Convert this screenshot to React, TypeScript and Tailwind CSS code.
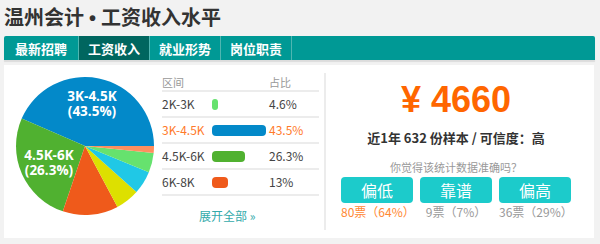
import React from 'react';

const slices = [
  { pct: 43.5, color: '#0389c9' },
  { pct: 26.3, color: '#50b130' },
  { pct: 13, color: '#ef5a1b' },
  { pct: 5.6, color: '#dde000' },
  { pct: 5.4, color: '#20c8e6' },
  { pct: 4.6, color: '#66e26e' },
  { pct: 1.6, color: '#ff8f5e' },
];

const rows = [
  { range: '2K-3K', pct: 4.6, color: '#66e26e', hot: false },
  { range: '3K-4.5K', pct: 43.5, color: '#0389c9', hot: true },
  { range: '4.5K-6K', pct: 26.3, color: '#50b130', hot: false },
  { range: '6K-8K', pct: 13, color: '#ef5a1b', hot: false },
];

const tabs = ['最新招聘', '工资收入', '就业形势', '岗位职责'];

function Pie() {
  const cx = 70;
  const cy = 70;
  const r = 69;
  let start = 0;
  const pt = (deg: number) => {
    const a = (deg * Math.PI) / 180;
    return [cx + r * Math.cos(a), cy - r * Math.sin(a)];
  };
  return (
    <svg width="140" height="140" viewBox="0 0 140 140">
      {slices.map((s, i) => {
        const sweep = (s.pct / 100) * 360;
        const [x1, y1] = pt(start);
        const [x2, y2] = pt(start + sweep);
        start += sweep;
        const large = sweep > 180 ? 1 : 0;
        return (
          <path
            key={i}
            d={`M${cx} ${cy} L${x1} ${y1} A${r} ${r} 0 ${large} 0 ${x2} ${y2} Z`}
            fill={s.color}
          />
        );
      })}
      <g fill="#fff" fontFamily="'Open Sans', sans-serif" fontWeight="700" fontSize="13.5" textAnchor="middle">
        <text x="77" y="25">3K-4.5K</text>
        <text x="77" y="40">(43.5%)</text>
        <text x="34" y="84">4.5K-6K</text>
        <text x="34" y="99">(26.3%)</text>
      </g>
    </svg>
  );
}

export default function App() {
  return (
    <div className="w-[600px] h-[244px] bg-[#f2f2f2] pl-[4px] font-['Noto_Sans_CJK_SC',sans-serif] text-[#333]">
      <h1 className="pt-[5px] h-[36px] text-[20px] leading-[24px] font-bold text-[#333]">
        温州会计<span className="mx-[5px] font-['Liberation_Sans',sans-serif]">•</span>工资收入水平
      </h1>

      <div className="w-[591px] h-[24px] bg-[#009995] rounded-t-[2px] flex shadow-[0_2px_1px_#dcdcdc]">
        {tabs.map((t, i) => (
          <div
            key={t}
            className={`${i === 0 ? 'w-[75px] rounded-tl-[2px]' : 'w-[71px]'} ${i === 1 ? 'bg-[#00665f]' : ''} h-full border-r border-[#4fb6b1] flex items-center justify-center text-white text-[13px] font-bold leading-none`}
          >
            {t}
          </div>
        ))}
      </div>

      <div className="mt-[5px] w-[590px] h-[173px] bg-white flex">
        <div className="pl-[11px] pt-[11px]">
          <Pie />
        </div>

        <div className="ml-[7px] w-[157px] pt-[9px] text-[12px]">
          <div className="h-[18px] flex items-center border-b-2 border-[#ececec] text-[11px] text-[#999]">
            <span className="w-[107px]">区间</span>
            <span>占比</span>
          </div>
          {rows.map((r) => (
            <div
              key={r.range}
              className={`h-[26px] flex items-center border-b-2 border-[#ececec] ${r.hot ? 'text-[#ff7a2a]' : 'text-[#444]'}`}
            >
              <span className="w-[50px]">{r.range}</span>
              <span className="w-[57px] flex">
                <span
                  className="h-[11px] rounded-[4px] block"
                  style={{ width: Math.max(5, r.pct * 1.24), background: r.color }}
                />
              </span>
              <span>{r.pct}%</span>
            </div>
          ))}
          <div className="mt-[12px] pl-[37px] text-[12px] leading-[16px] text-[#33aaaa]">展开全部 »</div>
        </div>

        <div className="ml-[5px] my-[8px] w-[2px] bg-[#ececec]" />

        <div className="flex-1 pr-[8px] flex flex-col items-center">
          <div className="mt-[15px] h-[40px] leading-[40px] text-[36px] font-bold text-[#ff6600] font-['Liberation_Sans','Noto_Sans_CJK_SC',sans-serif]">
            ¥ 4660
          </div>
          <div className="mt-[9px] text-[13px] leading-[18px] font-bold text-[#333]">近1年 632 份样本 / 可信度：高</div>
          <div className="mt-[12px] text-[11px] leading-[16px] text-[#999]">你觉得该统计数据准确吗？</div>
          <div className="mt-[2px] flex gap-[7px]">
            {[
              { t: '偏低', v: '80票（64%）', hot: true },
              { t: '靠谱', v: '9票（7%）', hot: false },
              { t: '偏高', v: '36票（29%）', hot: false },
            ].map((b) => (
              <div key={b.t} className="w-[72px] flex flex-col items-center">
                <div className="w-full h-[26px] rounded-[4px] bg-[#1ccbcb] text-white text-[16px] leading-[26px] text-center">
                  {b.t}
                </div>
                <div className={`mt-[1px] text-[12px] leading-[16px] ${b.hot ? 'text-[#ff8833]' : 'text-[#999]'}`}>{b.v}</div>
              </div>
            ))}
          </div>
        </div>
      </div>
    </div>
  );
}
